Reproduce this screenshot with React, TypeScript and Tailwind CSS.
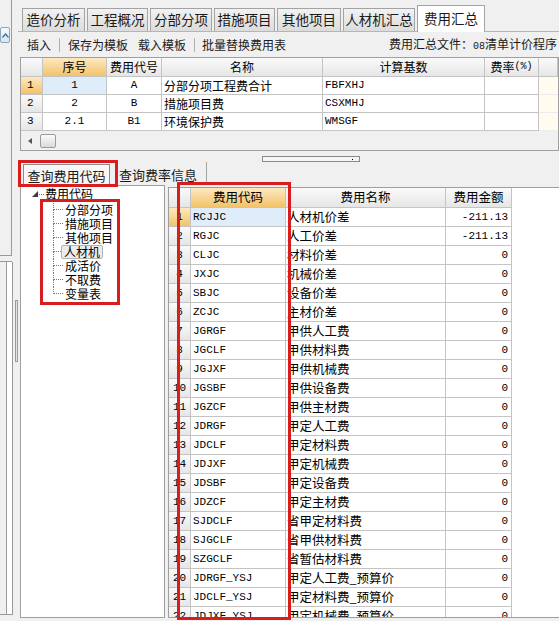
const mono = "font-['Liberation_Mono','Noto_Sans_CJK_SC',monospace]";

const topTabs = [
  { t: "造价分析", w: "w-[63px]" },
  { t: "工程概况", w: "w-[61px]" },
  { t: "分部分项", w: "w-[62px]" },
  { t: "措施项目", w: "w-[61px]" },
  { t: "其他项目", w: "w-[64px]" },
  { t: "人材机汇总", w: "w-[72px]" },
];

const upperRows = [
  { n: "1", seq: "1", code: "A", name: "分部分项工程费合计", base: "FBFXHJ" },
  { n: "2", seq: "2", code: "B", name: "措施项目费", base: "CSXMHJ" },
  { n: "3", seq: "2.1", code: "B1", name: "环境保护费", base: "WMSGF" },
];

const codes: [string, string, string][] = [
  ["RCJJC", "人材机价差", "-211.13"],
  ["RGJC", "人工价差", "-211.13"],
  ["CLJC", "材料价差", "0"],
  ["JXJC", "机械价差", "0"],
  ["SBJC", "设备价差", "0"],
  ["ZCJC", "主材价差", "0"],
  ["JGRGF", "甲供人工费", "0"],
  ["JGCLF", "甲供材料费", "0"],
  ["JGJXF", "甲供机械费", "0"],
  ["JGSBF", "甲供设备费", "0"],
  ["JGZCF", "甲供主材费", "0"],
  ["JDRGF", "甲定人工费", "0"],
  ["JDCLF", "甲定材料费", "0"],
  ["JDJXF", "甲定机械费", "0"],
  ["JDSBF", "甲定设备费", "0"],
  ["JDZCF", "甲定主材费", "0"],
  ["SJDCLF", "省甲定材料费", "0"],
  ["SJGCLF", "省甲供材料费", "0"],
  ["SZGCLF", "省暂估材料费", "0"],
  ["JDRGF_YSJ", "甲定人工费_预算价", "0"],
  ["JDCLF_YSJ", "甲定材料费_预算价", "0"],
  ["JDJXF_YSJ", "甲定机械费_预算价", "0"],
];

const treeItems = ["分部分项", "措施项目", "其他项目", "人材机", "成活价", "不取费", "变量表"];

const hdr = "bg-gradient-to-b from-[#fafafa] to-[#e6e6e6]";
const hdrSel = "bg-gradient-to-b from-[#fde9c0] to-[#f3c268]";

function LeftStrip() {
  return (
    <div className="w-[18px] flex flex-col">
      <div className="h-[255px] w-[12px] border-r border-[#9a9a9a]">
        <div className="mt-[27px] w-[10px] h-[16px] rounded-[2px] border border-[#8fa6bf] bg-gradient-to-b from-[#f6f9fc] to-[#d9e4ef] flex items-center justify-center">
          <svg width="7" height="5" viewBox="0 0 7 5">
            <path d="M0.5 4.5 L3.5 1 L6.5 4.5" fill="none" stroke="#3d6fa8" strokeWidth="1.3" />
          </svg>
        </div>
      </div>
      <div className="h-[7px] w-[12px] border-y border-[#9a9a9a]" />
      <div className="flex-1 flex pb-[6px]">
        <div className="w-[7px] border-r border-b border-[#9a9a9a]" />
        <div className="w-[6px] border-r border-b border-[#9a9a9a] bg-white" />
        <div className="ml-[2px] mt-[38px] w-[3px] h-[62px] border border-[#9a9a9a] bg-[#e4e4e4]" />
      </div>
    </div>
  );
}

function TopTabs() {
  return (
    <div className="h-[31px] flex items-end gap-[2px] pl-[4px] text-[13.5px] text-[#1a1a1a]">
      {topTabs.map((t) => (
        <div
          key={t.t}
          className={`${t.w} h-[23px] flex items-center justify-center border border-b-0 border-[#a3a3a3] bg-gradient-to-b from-[#f2f2f2] to-[#dcdcdc]`}
        >
          {t.t}
        </div>
      ))}
      <div className="w-[68px] h-[27px] -mb-px relative z-10 flex items-center justify-center border border-b-0 border-[#a3a3a3] bg-white">
        费用汇总
      </div>
    </div>
  );
}

function Toolbar() {
  return (
    <div className="h-[26px] flex items-center border-t border-[#b5b5b5] text-[12px] text-[#1a1a1a]">
      <span className="ml-[9px]">插入</span>
      <span className="ml-[8px] h-[14px] border-l border-[#b0b0b0]" />
      <span className="ml-[8px]">保存为模板</span>
      <span className="ml-[10px]">载入模板</span>
      <span className="ml-[8px] h-[14px] border-l border-[#b0b0b0]" />
      <span className="ml-[7px]">批量替换费用表</span>
      <span className="ml-auto mr-[2px] whitespace-nowrap">
        费用汇总文件：<span className={`${mono} text-[10px]`}>08</span>清单计价程序
      </span>
    </div>
  );
}

function UpperGrid() {
  const cell = "border-r border-b border-[#c4c4c4] flex items-center";
  return (
    <div className="ml-[2px] h-[94px] border border-[#9f9f9f] bg-white flex flex-col overflow-hidden">
      <div className="h-[19px] flex shrink-0">
        <div className={`${cell} ${hdr} w-[22px]`} />
        <div className={`${cell} ${hdrSel} w-[64px] justify-center`}>序号</div>
        <div className={`${cell} ${hdr} w-[55px] justify-center`}>费用代号</div>
        <div className={`${cell} ${hdr} w-[161px] justify-center`}>名称</div>
        <div className={`${cell} ${hdr} w-[162px] justify-center`}>计算基数</div>
        <div className={`${cell} ${hdr} w-[54px] justify-center`}>
          费率<span className={`${mono} text-[10px]`}>(%)</span>
        </div>
        <div className={`${cell} ${hdr} flex-1`} />
      </div>
      {upperRows.map((r, i) => (
        <div key={r.n} className="h-[18px] flex shrink-0">
          <div className={`${cell} ${i === 0 ? hdrSel : hdr} w-[22px] pl-[6px] ${mono} text-[11px]`}>{r.n}</div>
          <div className={`${cell} w-[64px] justify-center ${mono} text-[11px] ${i === 0 ? "bg-[#dfecfa]" : ""}`}>{r.seq}</div>
          <div className={`${cell} w-[55px] justify-center ${mono} text-[11px]`}>{r.code}</div>
          <div className={`${cell} w-[161px] pl-[2px]`}>{r.name}</div>
          <div className={`${cell} w-[162px] pl-[2px] ${mono} text-[11px]`}>{r.base}</div>
          <div className={`${cell} w-[54px]`} />
          <div className="flex-1 border-b border-[#ececec] bg-[#fffcef]" />
        </div>
      ))}
      <div className="flex-1 flex items-center bg-[#f0f0f0]">
        <svg className="ml-[7px]" width="4" height="6" viewBox="0 0 4 6">
          <path d="M4 0 L0 3 L4 6 Z" fill="#555" />
        </svg>
        <div className="ml-[8px] w-[16px] h-[14px] rounded-[2px] border border-[#9c9c9c] bg-gradient-to-b from-[#fbfbfb] to-[#dadada]" />
      </div>
    </div>
  );
}

function Splitter() {
  return (
    <div className="h-[11px] flex items-start">
      <div className="ml-[244px] mt-[5px] w-[98px] h-[6px] border border-[#8a8a8a] bg-[#f6f6f6] flex items-center justify-end pr-[6px]">
        <div className="w-[1px] h-[1px] bg-black" />
      </div>
    </div>
  );
}

function LowerTabs() {
  return (
    <div className="h-[23px] flex items-end text-[13px] text-[#1a1a1a]">
      <div className="ml-[5px] w-[87px] h-[21px] flex items-center justify-center border border-[#8c8c8c] border-b-0 bg-[#f7f7f7]">
        查询费用代码
      </div>
      <div className="ml-[9px] h-[21px] flex items-center">查询费率信息</div>
      <div className="ml-[9px] h-[23px] border-l border-[#a5a5a5]" />
    </div>
  );
}

function Tree() {
  return (
    <div className="ml-[2px] w-[145px] border border-[#9f9f9f] bg-white text-[12px] text-black">
      <div className="h-[14px] mt-px flex items-center pl-[11px]">
        <svg width="6" height="6" viewBox="0 0 6 6">
          <path d="M6 0 L6 6 L0 6 Z" fill="#3c3c3c" />
        </svg>
        <span className="w-[5px] ml-[1px] border-t border-dotted border-[#777]" />
        <span className="ml-[1px]">费用代码</span>
      </div>
      <div className="mt-[2px]">
        {treeItems.map((t, i) => (
          <div key={t} className="h-[14px] flex items-stretch pl-[32px]">
            <div className="w-[10px] flex flex-col">
              <div className="h-[7px] border-l border-b border-dotted border-[#777]" />
              <div className={`flex-1 ${i < treeItems.length - 1 ? "border-l border-dotted border-[#777]" : ""}`} />
            </div>
            <div className="flex items-center">
              {t === "人材机" ? (
                <span className="-ml-[2px] h-[14px] px-[2px] flex items-center rounded-[2px] border border-[#b3b3b3] bg-[#ececec]">{t}</span>
              ) : (
                <span className="ml-[2px]">{t}</span>
              )}
            </div>
          </div>
        ))}
      </div>
    </div>
  );
}

function CodeTable() {
  const cell = "border-r border-b border-[#c4c4c4] flex items-center shrink-0";
  return (
    <div className="ml-[3px] mt-[2px] flex-1 min-w-0 flex flex-col bg-white border-t border-l border-b border-[#9f9f9f] overflow-hidden">
      <div className="h-[20px] flex shrink-0 text-[12.5px]">
        <div className={`${cell} ${hdr} w-[22px]`} />
        <div className={`${cell} ${hdrSel} w-[95px] justify-center`}>费用代码</div>
        <div className={`${cell} ${hdr} w-[160px] justify-center`}>费用名称</div>
        <div className={`${cell} ${hdr} w-[66px] justify-center`}>费用金额</div>
      </div>
      {codes.map(([c, n, v], i) => (
        <div key={c} className="h-[19px] flex shrink-0">
          <div className={`${cell} ${i === 0 ? hdrSel : hdr} w-[22px] justify-center ${mono} text-[11px]`}>{i + 1}</div>
          <div className={`${cell} w-[95px] pl-[2px] ${mono} text-[11px] ${i === 0 ? "bg-[#dfecfa]" : ""}`}>{c}</div>
          <div className={`${cell} w-[160px] pl-px text-[12.5px]`}>{n}</div>
          <div className={`${cell} w-[66px] justify-end pr-[3px] ${mono} text-[11px]`}>{v}</div>
        </div>
      ))}
    </div>
  );
}

export default function App() {
  return (
    <div className="relative flex w-[559px] h-[621px] overflow-hidden bg-[#f0f0f0] text-[12px] leading-none text-black font-['Noto_Sans_CJK_SC',sans-serif]">
      <LeftStrip />
      <div className="flex flex-col flex-1 min-w-0">
        <TopTabs />
        <Toolbar />
        <UpperGrid />
        <Splitter />
        <LowerTabs />
        <div className="flex flex-1 min-h-0 pb-[3px]">
          <Tree />
          <CodeTable />
        </div>
      </div>
      {/* red annotation boxes */}
      <div className="absolute left-[18px] top-[160px] w-[100px] h-[27px] border-[3px] border-[#d71d1d]" />
      <div className="absolute left-[40px] top-[199px] w-[80px] h-[106px] border-[3px] border-[#d71d1d]" />
      <div className="absolute left-[177px] top-[182px] w-[114px] h-[438px] border-[3px] border-[#d71d1d]" />
    </div>
  );
}
